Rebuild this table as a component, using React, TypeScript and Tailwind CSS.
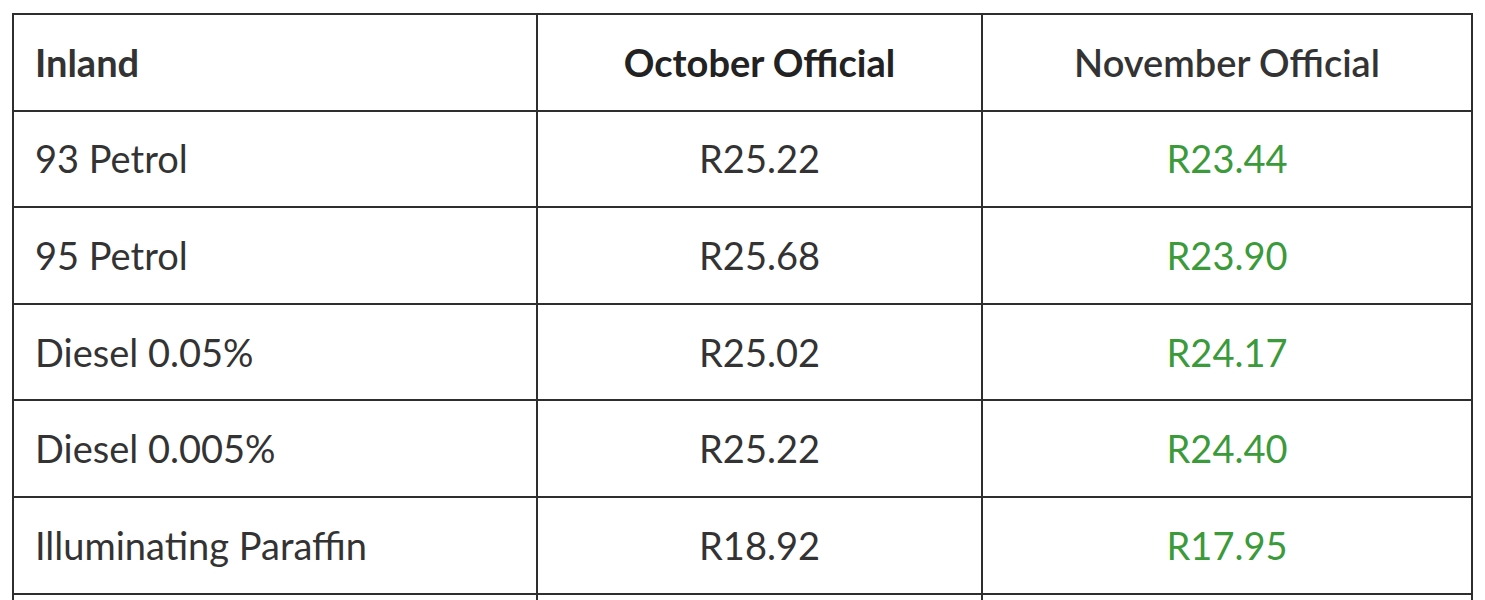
const rows = [
  { name: '93 Petrol', oct: 'R25.22', nov: 'R23.44' },
  { name: '95 Petrol', oct: 'R25.68', nov: 'R23.90' },
  { name: 'Diesel 0.05%', oct: 'R25.02', nov: 'R24.17' },
  { name: 'Diesel 0.005%', oct: 'R25.22', nov: 'R24.40' },
  { name: 'Illuminating Paraffin', oct: 'R18.92', nov: 'R17.95' },
];

export default function App() {
  return (
    <div className="bg-white h-[600px] overflow-hidden pt-[13px] pl-[12px] font-['Lato',sans-serif] text-[38px] text-[#333]">
      <table className="border-collapse w-[1459px] table-fixed">
        <colgroup>
          <col className="w-[524px]" />
          <col className="w-[445px]" />
          <col className="w-[490px]" />
        </colgroup>
        <thead>
          <tr className="h-[96.6px]">
            <th className="border-2 border-[#2e2e2e] text-left pl-[21px] font-bold">Inland</th>
            <th className="border-2 border-[#2e2e2e] text-center font-bold text-[#222]">October Official</th>
            <th className="border-2 border-[#2e2e2e] text-center font-semibold">November Official</th>
          </tr>
        </thead>
        <tbody>
          {rows.map((r) => (
            <tr key={r.name} className="h-[96.6px]">
              <td className="border-2 border-[#2e2e2e] pl-[21px]">{r.name}</td>
              <td className="border-2 border-[#2e2e2e] text-center">{r.oct}</td>
              <td className="border-2 border-[#2e2e2e] text-center text-[#3b9a3a]">{r.nov}</td>
            </tr>
          ))}
          {/* next row is cut off by the viewport */}
          <tr className="h-[96.6px]">
            <td className="border-2 border-[#2e2e2e]"></td>
            <td className="border-2 border-[#2e2e2e]"></td>
            <td className="border-2 border-[#2e2e2e]"></td>
          </tr>
        </tbody>
      </table>
    </div>
  );
}
